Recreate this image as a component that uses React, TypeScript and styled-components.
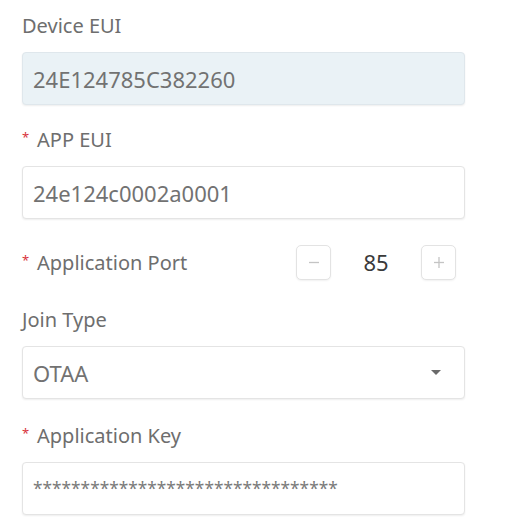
import React from 'react';
import styled, { createGlobalStyle } from 'styled-components';

const GlobalStyle = createGlobalStyle`
  body {
    margin: 0;
    background: #ffffff;
    font-family: "Noto Sans", "Open Sans", Arial, sans-serif;
  }
`;

const Page = styled.div`
  width: 506px;
  height: 532px;
  box-sizing: border-box;
  padding: 11px 41px 0 22px;
  overflow: hidden;
`;

const Field = styled.div<{ gap?: number }>`
  display: flex;
  flex-direction: column;
  margin-bottom: ${(p) => p.gap ?? 20}px;
`;

const Label = styled.div`
  display: flex;
  align-items: center;
  height: 28px;
  font-size: 20px;
  color: #6e6e6e;
  margin-bottom: 13px;
`;

const Star = styled.span`
  color: #d8333b;
  font-size: 13px;
  line-height: 1;
  align-self: flex-start;
  margin-top: 6px;
  width: 15px;
`;

const Box = styled.div<{ disabled?: boolean }>`
  height: 53px;
  box-sizing: border-box;
  display: flex;
  align-items: center;
  padding: 0 10px;
  border: 1px solid ${(p) => (p.disabled ? '#dfe7ec' : '#e4e4e4')};
  border-radius: 4px;
  background: ${(p) => (p.disabled ? '#eaf2f6' : '#ffffff')};
  box-shadow: 0 1px 2px rgba(0, 0, 0, 0.07);
  font-size: 22px;
  color: #727272;
`;

const Masked = styled.span`
  font-size: 17.3px;
  color: #7a7a7a;
`;

const Arrow = styled.span`
  margin-left: auto;
  margin-right: 13px;
  width: 0;
  height: 0;
  border-left: 5px solid transparent;
  border-right: 5px solid transparent;
  border-top: 5px solid #6a6a6a;
`;

const PortRow = styled.div`
  display: flex;
  align-items: center;
  height: 46px;
  margin-bottom: 20px;
`;

const PortLabel = styled(Label)`
  margin-bottom: 0;
  flex: 1;
`;

const Stepper = styled.div`
  display: flex;
  align-items: center;
  margin-right: 9px;
`;

const StepButton = styled.button`
  width: 35px;
  height: 35px;
  padding: 0;
  display: flex;
  align-items: center;
  justify-content: center;
  border: 1px solid #e3e3e3;
  border-radius: 5px;
  background: #ffffff;
  box-shadow: 0 1px 2px rgba(0, 0, 0, 0.06);
`;

const Count = styled.span`
  width: 90px;
  text-align: center;
  font-size: 22px;
  color: #3a3a3a;
`;

const StepIcon = ({ plus }: { plus?: boolean }) => (
  <svg width="14" height="14" viewBox="0 0 14 14">
    <line x1="2" y1="7.5" x2="12" y2="7.5" stroke="#c4c4c4" strokeWidth="1.3" />
    {plus && <line x1="7" y1="2" x2="7" y2="13" stroke="#c4c4c4" strokeWidth="1.3" />}
  </svg>
);

export default function App() {
  return (
    <>
      <GlobalStyle />
      <Page>
        <Field>
          <Label>Device EUI</Label>
          <Box disabled>24E124785C382260</Box>
        </Field>
        <Field>
          <Label>
            <Star>*</Star>APP EUI
          </Label>
          <Box>24e124c0002a0001</Box>
        </Field>
        <PortRow>
          <PortLabel>
            <Star>*</Star>Application Port
          </PortLabel>
          <Stepper>
            <StepButton>
              <StepIcon />
            </StepButton>
            <Count>85</Count>
            <StepButton>
              <StepIcon plus />
            </StepButton>
          </Stepper>
        </PortRow>
        <Field gap={22}>
          <Label>Join Type</Label>
          <Box>
            OTAA
            <Arrow />
          </Box>
        </Field>
        <Field>
          <Label>
            <Star>*</Star>Application Key
          </Label>
          <Box>
            <Masked>********************************</Masked>
          </Box>
        </Field>
      </Page>
    </>
  );
}
